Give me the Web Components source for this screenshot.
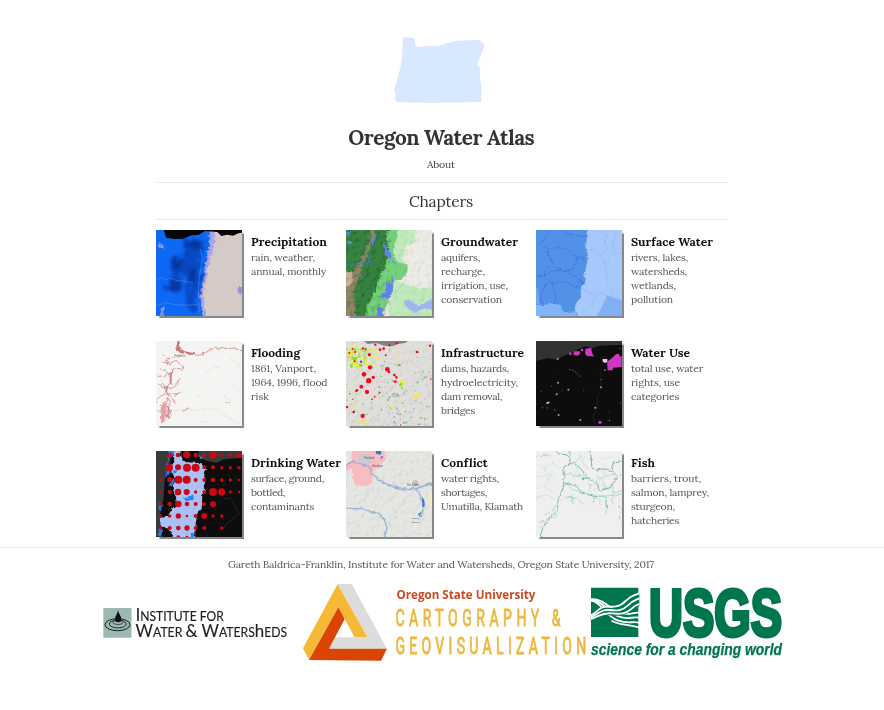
<!DOCTYPE html>
<html lang="en"><head><meta charset="utf-8"><title>Oregon Water Atlas</title>
<style>html,body{margin:0;background:#fff;color:#333;font-family:Lora,"Liberation Serif",serif}</style></head>
<body><water-atlas></water-atlas>
<script>
// One line of text whose tracking is adjusted so it occupies the width in "w".
customElements.define('fit-line', class extends HTMLElement{
 connectedCallback(){
  if(this.shadowRoot)return;
  const r=this.attachShadow({mode:'open'});
  r.innerHTML='<style>:host{display:block;white-space:nowrap}span{display:inline-block}</style><span><slot></slot></span>';
  const s=r.querySelector('span'),n=[...this.textContent].length,w=+this.getAttribute('w');
  const d=(w-s.getBoundingClientRect().width)/n;
  s.style.letterSpacing=d.toFixed(3)+'px';
  s.style.marginRight=(-d).toFixed(3)+'px';
 }
});
const rnd=seed=>()=>(seed=(seed*16807)%2147483647)/2147483647;
const dots=(list,fill)=>list.map(([x,y,r])=>`<circle cx="${x}" cy="${y}" r="${r}" fill="${fill}"/>`).join('');
const scatter=(seed,n,x,y,w,h,r,fill,o=1)=>{const q=rnd(seed);let s='';for(let i=0;i<n;i++){s+=`<circle cx="${(x+q()*w).toFixed(1)}" cy="${(y+q()*h).toFixed(1)}" r="${(r*(.6+q()*.8)).toFixed(1)}" fill="${fill}" opacity="${o}"/>`}return s};
const FX=`<defs>
<filter id="rough" color-interpolation-filters="sRGB" x="-10%" y="-10%" width="120%" height="120%"><feTurbulence type="fractalNoise" baseFrequency=".09" numOctaves="3" seed="4"/><feDisplacementMap in="SourceGraphic" scale="20" xChannelSelector="R" yChannelSelector="G"/><feGaussianBlur stdDeviation="1.1"/></filter>
<filter id="wob" color-interpolation-filters="sRGB" x="-10%" y="-10%" width="120%" height="120%"><feTurbulence type="fractalNoise" baseFrequency=".07" numOctaves="2" seed="8"/><feDisplacementMap in="SourceGraphic" scale="12" xChannelSelector="R" yChannelSelector="G"/><feGaussianBlur stdDeviation=".8"/></filter>
<filter id="soft" color-interpolation-filters="sRGB" x="-30%" y="-30%" width="160%" height="160%"><feTurbulence type="fractalNoise" baseFrequency=".06" numOctaves="4" seed="3" result="t"/><feDisplacementMap in="SourceGraphic" in2="t" scale="50" xChannelSelector="R" yChannelSelector="G"/><feGaussianBlur stdDeviation="4.5"/></filter>
<filter id="relief" x="0" y="0" width="100%" height="100%"><feTurbulence type="fractalNoise" baseFrequency=".06" numOctaves="4" seed="11"/><feDiffuseLighting surfaceScale="7" lighting-color="#fff" diffuseConstant="1.25"><feDistantLight azimuth="225" elevation="52"/></feDiffuseLighting></filter></defs>`;
const relief=(o,x=0,w=300)=>`<rect x="${x}" y="0" width="${w}" height="300" filter="url(#relief)" opacity="${o}" style="mix-blend-mode:multiply"/>`;
const MAPS={
precip:['18 15 258 258',`<rect width="300" height="300" fill="#d5cac5"/>
 <path d="M0 0H194L192 55 186 95 172 130 164 170 158 210 164 245 177 290H0Z" fill="#aaa4ec" filter="url(#rough)"/>
 <path d="M-20-20H179L178 52 172 95 165 125 160 170 150 215 154 250 168 310H-20Z" fill="#0d68f4" filter="url(#rough)"/>
 <g filter="url(#soft)" fill="#0741b8" opacity=".8"><path d="M98 52 130 34 165 45 158 84 150 112 157 165 144 199 137 262 118 258 108 210 115 168 98 142 96 196 72 204 47 194 48 168 70 152 55 122 62 98 92 92 108 78Z"/></g><g filter="url(#soft)" fill="#062c8c" opacity=".65"><ellipse cx="134" cy="62" rx="18" ry="20"/><ellipse cx="80" cy="122" rx="18" ry="20"/><ellipse cx="74" cy="182" rx="18" ry="14"/><ellipse cx="126" cy="150" rx="13" ry="26"/></g>
 <g filter="url(#rough)" fill="#8f92e8"><ellipse cx="34" cy="63" rx="8" ry="6"/><ellipse cx="271" cy="196" rx="9" ry="11"/><path d="M24 276 34 249 43 238 40 262 34 276Z"/></g>
 <path d="M15 170 31 158 47 163 65 160 80 167 102 168 129 174M18 242 50 233 74 239 108 241 142 238M150 70 158 102 149 150 145 194 148 263" fill="none" stroke="#98b7ef" stroke-width="1.3" opacity=".7"/>
 <path d="M40 10H280V23L265 25 249 32 231 29 214 33 202 21 165 18 146 29 125 31 99 41 73 42 48 38Z" fill="#070707"/>`],
ground:['18 15 258 258',`<rect width="300" height="300" fill="#ecebe6"/><rect x="10" width="110" height="300" fill="#a59a82"/>
 <path d="M168 0H240L225 30 228 50 200 67 188 92 194 110 205 138 170 167 190 175 235 190 290 183V290H145L155 150Z" fill="#c0eabc" filter="url(#wob)"/>
 <path d="M115 8H172L170 42 160 80 170 108 203 122 200 150 182 164 155 168 146 222 122 290H68L95 180 125 120Z" fill="#74d07c" filter="url(#wob)"/>
 <path d="M0 -20H145L138 42 148 78 139 120 122 148 106 198 85 240 67 300H45L38 165 0 120Z" fill="#36833f" filter="url(#rough)"/>
 <path d="M95 -10H112L99 47 76 102 58 152 42 197 47 290H5V174L42 135 72 87 88 48Z" fill="#918567" filter="url(#rough)"/><path d="M10 140 34 142 40 160 30 182H10Z" fill="#c5b494" filter="url(#wob)"/>
 ${relief(.6,0,150)}${relief(.2,145,155)}
 <g filter="url(#wob)" fill="#6080ea"><path d="M132 54 143 76 155 92 152 104 138 88 129 66ZM140 172 160 177 158 205 143 222 120 216 133 200Z"/><path d="M110 244 128 252 132 280H113Z"/><path d="M156 100 167 115 157 110ZM18 20 30 23 22 37ZM98 36 110 24 105 48 94 65ZM19 49 34 48 37 58 20 56ZM156 148 160 169 153 180Z"/></g>
 <path d="M194 228 207 225 228 241 248 239 260 229 280 222V254L250 250 230 263 209 255 195 240Z" fill="#a0b4f0" filter="url(#wob)"/>
 <path d="M18 120 48 121 65 115 94 111M82 118 94 86M56 153 68 160" stroke="#496fd4" stroke-width="3" fill="none"/>`],
surface:['18 15 258 258',`<rect width="300" height="300" fill="#5291e8"/><path d="M172 -20 170 42 168 70 174 91 171 118 162 145 167 165 153 187 152 216 137 237 134 252 153 290H300V-20Z" fill="#a6c8fb" filter="url(#wob)"/>
 <path d="M231 211 276 226V275H197L213 251Z" fill="#80b0f5"/><path d="M5 239 42 240 62 236 83 234 94 243 102 260 123 264 134 256 151 290H5Z" fill="#83b4f7" filter="url(#wob)"/><path d="M15 185 26 194 28 238H15Z" fill="#70a4ee"/>
 <g fill="none" stroke="#2b62c8" stroke-width="1.8" opacity=".75" filter="url(#wob)"><path d="M60 15 48 35 36 54 20 59M38 67 62 72 85 65 104 70 126 83 145 93 168 104M51 77 60 104 75 126 106 138 130 130 143 98M18 155 40 154 62 139 98 136 108 138 126 151 151 165 162 180M43 154 45 136 59 124M58 167 82 175 110 172 130 184 151 186M60 170 45 183 33 207 38 238M63 171 75 204 77 233M92 15 107 25 150 34 168 34M105 15 110 23M155 176 151 163"/></g>
 <g fill="none" stroke="#86aeea" stroke-width="1.2" filter="url(#wob)"><path d="M170 82 193 72 212 93 226 114 232 150 231 180 249 211 276 222M226 114 255 82 276 86M255 82 249 51 261 18M213 92 231 66 225 44 237 15M155 190 177 203 198 211 214 202 231 211M196 211 182 240 157 265M213 251 228 230"/></g>`],
flood:['18 18 258 255',`<rect width="300" height="300" fill="#f4f4f2"/>
 <g filter="url(#wob)" fill="none" stroke-linejoin="round"><path d="M84 10V40L95 51 118 56 144 61 166 54 182 42 201 39 220 38 234 42 248 38 280 49" stroke="#cc8287" stroke-width="2.6"/><path d="M84 5V42L102 53" stroke="#c8777c" stroke-width="10"/><path d="M94 50 134 58" stroke="#c8777c" stroke-width="6"/>
 <path d="M98 57 76 63 55 72 39 62M87 64 76 78 60 83 37 82M78 75 92 91 102 102M22 123 38 126 57 118 66 104 80 100 100 103M65 103 62 145 44 157 49 175 34 183 20 192M44 158 68 158 78 149 91 132M50 175 62 184 75 205 72 193M49 178 91 175 70 181M55 184 39 209 35 235 36 266M52 191 62 202 57 215M52 189 45 221 57 250 65 225M18 202 38 212M20 225 38 235 61 246M21 147 48 161 34 139M59 119 46 106 31 101M60 67 49 76 60 91" stroke="#d78f93" stroke-width="2.4"/>
 <path d="M62 108V146M46 154 52 177M43 207 37 264M52 214 59 229 50 245" stroke="#cf858a" stroke-width="6"/><path d="M45 201 40 259" stroke="#e5a5a6" stroke-width="15" opacity=".6"/><path d="M97 229 121 216" stroke="#d78f93" stroke-width="3"/>
 <path d="M65 225 97 225 120 218M121 220 138 229 171 220 204 225 236 249 270 268M139 186 154 179M150 263 178 258M165 113 195 95 217 103M239 68 260 85 270 114M250 149 264 167M222 184 241 197 239 215M268 91 273 79" stroke="#e7c9c8" stroke-width="1.2"/></g>
 <g font-family="Liberation Sans"><text x="73" y="67" font-size="9" fill="#888">Portland</text><text x="225" y="203" font-size="6" fill="#999">Boise</text></g>`],
infra:['18 18 258 255',`<rect width="300" height="300" fill="#e0dfdb"/>${relief(.16)}<path d="M63 10H210L198 23 175 27 157 34 132 32 109 24 83 27Z" fill="#828282"/>
 <path d="M75 10V50L93 69 110 94M76 105 125 160 150 249M139 81 170 93 207 75 263 123M153 135 200 146 235 199" stroke="#c7c9c8" fill="none" stroke-width="1.5"/>
 ${scatter(31,60,22,38,60,58,3,'#96df45')}${scatter(87,50,24,32,95,67,3,'#f0ed41')}${scatter(112,75,68,42,203,225,2,'#8cbd85',.75)}${scatter(19,38,115,90,155,180,2.2,'#59b85b',.8)}${scatter(221,25,18,90,45,180,2,'#92ce79',.8)}${scatter(76,26,145,175,90,93,2.4,'#6c8fb7',.6)}
 ${dots([[186,142,7],[188,152,5],[154,214,5],[232,180,7],[222,184,5],[115,70,5],[45,88,6],[176,63,4],[45,208,4],[224,185,4],[68,261,6],[78,264,4],[55,255,4]],'#f1ec47')}${dots([[181,150,4],[44,72,6],[62,91,5],[34,94,4],[184,147,4]],'#79df33')}
 ${dots([[90,97,6.5],[72,118,7],[86,137,8],[100,127,5],[64,155,6],[81,171,6.5],[68,243,6.5],[142,103,7],[88,59,5],[51,166,4],[163,120,4],[169,127,4],[147,111,4],[166,140,4],[148,31,3.5],[106,29,3.5],[120,44,4],[131,41,4],[231,51,4],[270,32,3.5],[170,24,4],[38,42,3],[28,54,3],[45,51,3],[69,40,3.5],[63,80,3.5],[48,168,3],[41,231,4],[21,216,4],[104,185,2.5],[96,193,2.5],[119,173,2.5],[272,132,2.5],[179,90,2.5],[77,43,3],[44,79,3],[137,61,3],[29,176,2],[38,193,2],[182,270,2]],'#f00d1b')}`],
use:['18 18 258 255',`<rect width="300" height="300" fill="#0e0d0e"/><path d="M0 0H280V30L235 31 207 32 187 39 165 34 142 44 115 57 97 64 83 74 53 69 18 78Z" fill="#323232"/><path d="M211 103 215 151 203 186 202 212 190 244 196 272" stroke="#242424" stroke-width="2" fill="none"/>
 <g fill="#d138c2"><path d="M167 41 184 38 185 49 191 65 181 63 172 64 165 57ZM132 49H149L151 55 144 62 130 60ZM231 80 246 69 259 57H268V64H275V96L249 98 248 106H233Z"/><circle cx="121" cy="56" r="4"/><circle cx="156" cy="45" r="4"/><circle cx="210" cy="262" r="5"/><circle cx="225" cy="105" r="3"/></g><path d="M218 72H232V80L226 84 218 80Z" fill="#f7c3ed"/>
 ${dots([[83,72,3],[84,143,3],[115,164,3],[80,178,3],[86,240,3],[151,255,3],[213,157,3],[196,218,3],[238,256,2]],'#b795a2')}${scatter(44,11,20,88,250,150,1.7,'#8a4874')}<path d="m49 204 9-3-2 3-6 2" stroke="#eac3d6" fill="none" stroke-width="3"/><path d="m117 103 8 1 10 6 13 12 2 5M268 39 272 44M270 206 275 202" stroke="#bd4874" fill="none" stroke-width="2.5" stroke-dasharray="5 4"/>`],
drinking:['18 18 258 258',`<rect width="300" height="300" fill="#0e0d0e"/><path d="M18 18H62L60 74 45 96 40 164 31 205 34 275H18ZM145 18H276V38L222 43 200 53 169 47 145 35Z" fill="#393b3a"/><path d="M55 15 72 18 66 39 52 46 46 60 60 85 46 99 52 68ZM143 30 159 39 150 43ZM26 172 40 179 32 199 26 192ZM27 248 40 255 32 275 23 269ZM60 105 72 99 70 120 59 128Z" fill="#2778dc" filter="url(#wob)"/>
 <path d="M69 10H90L93 40 103 51 155 55 168 73 162 80 166 107 161 125 166 139 157 151 155 192 142 205 137 237 135 290H82L54 251 31 239 33 219 58 213 64 192 80 182 78 153 70 137 76 97 61 82 62 61 73 52Z" fill="#abc1f3" filter="url(#wob)"/>
 <path d="M69 75 82 77 72 92ZM93 153 105 160 131 152 128 166 110 167ZM120 266 133 264 133 275H119Z" fill="#2281f4" filter="url(#wob)"/><path d="M218 161H243M243 165 263 194 267 208 238 229 218 252" stroke="#373737" fill="none" stroke-width="2"/>
 <path d="M93 20 99 75M80 112 135 180 109 276M78 199 140 241" stroke="#8fa8d7" fill="none"/>
 ${dots([[59,31,8],[84,30,7],[110,29,11],[137,30,7],[162,30,6],[189,30,11],[215,30,5],[241,30,6],[267,30,8],[58,68,11],[84,67,9],[111,68,12],[137,68,12],[163,67,6],[189,67,6],[215,68,5],[241,68,5],[267,68,5],[32,105,5],[59,104,8],[85,104,12],[110,104,12],[137,105,6],[163,105,6],[189,105,7],[215,105,5],[241,105,5],[267,105,4],[31,141,4],[59,141,6],[84,141,10],[110,141,9],[137,141,5],[163,141,6],[189,141,12],[215,141,11],[241,141,5],[267,141,4],[32,178,5],[59,177,7],[85,177,10],[111,177,7],[137,177,6],[162,178,6],[189,178,9],[31,213,5],[59,213,5],[85,213,8],[111,213,4],[137,213,6],[163,213,9],[189,213,5],[215,213,5],[32,249,5],[59,249,6],[85,249,7],[111,249,8],[137,249,6],[163,249,6],[215,249,5],[85,277,6],[111,277,5],[241,213,1]],'#cb0715')}`],
conflict:['18 18 258 258',`<rect width="300" height="300" fill="#e6e6e3"/>${relief(.16)}<path d="M35 5H136L136 50 122 56 122 68 98 78 97 111 77 125 45 121 35 95 40 69 18 75V54L34 54Z" fill="#f7bdc1" filter="url(#wob)"/>
 <ellipse cx="75" cy="43" rx="23" ry="15" fill="#c7cbd2"/><circle cx="226" cy="114" r="9" fill="#c4c4c4"/><path d="M268 145 276 138V190L264 176Z" fill="#efecc7"/>
 <g fill="none" stroke="#9bb2d6" filter="url(#wob)"><path d="M14 63 37 48 61 57 88 64 94 86 124 111 155 124 193 132 230 130 285 112" stroke-width="5"/><path d="M10 188 42 191 65 190 89 198 118 206 134 226 141 249 133 280M229 132 241 151 251 178 248 201 234 226" stroke-width="4"/><path d="M106 112 96 135 75 158 78 190M147 223 158 193 197 158 230 132M37 55 28 83 18 122M155 123 168 93 193 73M142 235 178 256 201 276" stroke-width="1.3" opacity=".5"/></g>
 <path d="M107 15H124L123 29 108 26ZM121 36 130 32 125 43ZM246 155 253 166 253 183 247 187ZM246 198 238 214 234 208Z" fill="#3e75c6"/><g font-family="Liberation Sans" font-size="8" fill="#555"><text x="73" y="42">Portland</text><text x="96" y="67">Gresham</text><text x="200" y="123">The Dalles</text><text x="215" y="223" font-size="7">Warm</text><text x="215" y="234" font-size="7">Springs</text></g>`],
fish:['18 18 258 258',`<rect width="300" height="300" fill="#eeefee"/>
 <g fill="none" stroke="#72b7a7" filter="url(#wob)"><path d="M70 10 85 26 112 30 120 44 119 57 98 71 102 96 100 127 85 160 82 194 56 224 38 248 28 285M116 57 133 55 151 70 170 93M178 10 184 38 185 65 202 75 222 70 246 78 249 54 280 50M101 114 140 124 155 144 194 154 227 153 229 188M155 101 179 99 199 115 210 138 241 128 259 99 250 79" stroke-width="2.8"/><path d="M18 36 44 28 66 34M121 46 118 10M133 55 148 42 149 22M99 89 121 87 150 92 180 99M197 112 216 97 240 91 280 92M200 92 219 108 229 133 245 116 252 144 280 134M98 126 120 109M102 111 130 135 152 140M177 99 181 126 172 149M250 154 246 178M229 153 280 147M230 189 227 205M265 180 276 192 268 219 276 228M29 247 53 232M22 232 43 230 57 220 74 215 85 197M42 211 69 197 78 177M86 164 96 164M103 156 144 160 158 177M127 151 127 175M186 179 196 154 214 179" stroke-width="2" opacity=".65"/><path d="M20 55 42 71 67 54 95 73M19 98 57 88 82 110M19 130 42 122 68 141 85 130M20 159 50 149 78 163M44 71 58 98 45 126M134 58 144 79 135 94M160 31 162 59 184 73M202 55 218 40 241 38M216 69 225 91M182 119 205 116 222 124M183 139 200 130M243 136 255 158 274 166" stroke-width="1.3" opacity=".45"/></g>`]
};
customElements.define('map-tile', class extends HTMLElement{
 connectedCallback(){
  const [vb,body]=MAPS[this.getAttribute('map')];
  this.attachShadow({mode:'open'}).innerHTML=`<style>:host{display:block;width:86px;height:var(--h,86px);flex:none;box-shadow:2.4px 2.4px 1px #888}svg{display:block;width:100%;height:100%;overflow:hidden}</style><svg viewBox="${vb}" preserveAspectRatio="none">${FX}${body}</svg>`;
 }
});
customElements.define('atlas-chapter', class extends HTMLElement{
 connectedCallback(){
  const [t,w]=this.getAttribute('heading').split('|');
  this.attachShadow({mode:'open'}).innerHTML=`<style>:host{display:flex;gap:9px;align-items:flex-start}h3{margin:4px 0 1px;font:bold 12px/16px Lora,"Liberation Serif",serif;color:#111}.b{font-size:10.4px;line-height:14px;color:#555}</style>
  <map-tile map="${this.getAttribute('map')}"></map-tile><div><h3><fit-line w="${w}">${t}</fit-line></h3><div class="b">${this.getAttribute('lines').split(';').map(l=>{const [a,b]=l.split('|');return `<fit-line w="${b}">${a}</fit-line>`}).join('')}</div></div>`;
 }
});
const CH=[['precip','Precipitation|76','rain, weather,|64;annual, monthly|75'],['ground','Groundwater|77','aquifers,|39;recharge,|44;irrigation, use,|67;conservation|61'],['surface','Surface Water|82','rivers, lakes,|57;watersheds,|56;wetlands,|45;pollution|42'],
['flood','Flooding|49','1861, Vanport,|65;1964, 1996, flood|76;risk|18'],['infra','Infrastructure|83','dams, hazards,|68;hydroelectricity,|77;dam removal,|61;bridges|34'],['use','Water Use|59','total use, water|72;rights, use|49;categories|48'],
['drinking','Drinking Water|90','surface, ground,|73;bottled,|34;contaminants|63'],['conflict','Conflict|46','water rights,|58;shortages,|46;Umatilla, Klamath|82'],['fish','Fish|24','barriers, trout,|70;salmon, lamprey,|78;sturgeon,|44;hatcheries|48']];
customElements.define('atlas-header', class extends HTMLElement{
 connectedCallback(){this.attachShadow({mode:'open'}).innerHTML=`<style>:host{display:flex;flex-direction:column;align-items:center;padding-top:35px;width:571px;margin:0 0 0 156px}svg{display:block;width:94px;height:70px;margin-right:3px}
 h1{margin:17px 0 0;font:bold 20.8px/32px Lora,"Liberation Serif",serif}.a{font-size:10.4px;line-height:14px;margin:4px 1px 10px 0;color:#444}h2{box-sizing:border-box;width:100%;display:flex;justify-content:center;padding-right:1px;margin:0;font-size:15.6px;font-weight:400;line-height:36px;border:solid #e7e7e7;border-width:1px 0}</style>
 <svg viewBox="160 30 282 210"><path d="M190 37 202 36 225 40 228 62 235 66 249 65 263 62 286 64 304 61 331 52 354 47 386 46 419 45 432 56 434 64 424 91 412 118 420 127 422 139 421 160 425 179V231L272 234 172 231 166 222 168 205 163 192 169 176 176 153 185 113 189 71Z" fill="#d8e8ff"/></svg>
 <h1><fit-line w="186">Oregon Water Atlas</fit-line></h1><div class="a"><fit-line w="28">About</fit-line></div><h2><fit-line w="64">Chapters</fit-line></h2>`}
});
customElements.define('logo-iww', class extends HTMLElement{
 connectedCallback(){this.attachShadow({mode:'open'}).innerHTML=`<style>:host{display:block}svg{display:block;overflow:visible}</style><svg width="187" height="35" viewBox="103 606 187 35"><rect x="103.3" y="608" width="28.2" height="29.7" fill="#9bb8b2"/>
 <g fill="none" stroke="#151c1b"><ellipse cx="117.5" cy="624.7" rx="12.5" ry="6" stroke-width="1"/><ellipse cx="117.8" cy="624" rx="8.4" ry="3.9" stroke-width=".9"/><ellipse cx="118" cy="622.5" rx="5" ry="2" stroke-width=".7"/></g><path d="M118 610C117.5 614 115 616 115 619a3.2 3.2 0 0 0 6.4 0C121.400 616 118.700 614 118 610Z" fill="#111"/>
 <g font-family="Lato,sans-serif" fill="#222" stroke="#222" stroke-width=".15"><text x="135.8" y="620.8" font-size="17" textLength="88" lengthAdjust="spacingAndGlyphs">I<tspan font-size="13">NSTITUTE FOR</tspan></text>
 <text x="135.6" y="637.4" font-size="18" textLength="151.500" lengthAdjust="spacingAndGlyphs">W<tspan font-size="13">ATER </tspan>&amp; W<tspan font-size="13">ATERS</tspan>h<tspan font-size="13">EDS</tspan></text></g></svg>`}
});
customElements.define('logo-carto', class extends HTMLElement{
 connectedCallback(){this.attachShadow({mode:'open'}).innerHTML=`<style>:host{display:block}svg{display:block;overflow:visible}</style><svg width="287" height="80" viewBox="302 583 287 80"><g transform="translate(95 550) scale(.33333)"><path d="M728 102 624 295 642 330 730 172 779 262H818Z" fill="#f6b936"/><path d="M728 102H770L876 296H702L721 262H818Z" fill="#dcdcdc"/><path d="M730 172 749 207 702 296H876L858 332 642 330Z" fill="#dc4405"/></g>
 <text x="396.500" y="598.700" font-family="Open Sans,sans-serif" font-weight="bold" font-size="12.800" fill="#cc4a20" textLength="139" lengthAdjust="spacingAndGlyphs">Oregon State University</text>
 <g font-family="Roboto,sans-serif" font-size="23.4" fill="#efb73e" stroke="#efb73e" stroke-width=".9" transform="translate(396 0) scale(.6 1)"><text x="-1" y="626.2" textLength="275">CARTOGRAPHY &amp;</text><text x="-1" y="653.800" textLength="318">GEOVISUALIZATION</text></g></svg>`}
});
customElements.define('logo-usgs', class extends HTMLElement{
 connectedCallback(){this.attachShadow({mode:'open'}).innerHTML=`<style>:host{display:block}svg{display:block;overflow:visible}</style><svg width="195" height="78" viewBox="590 584 195 78"><g transform="translate(385 575) scale(.33333)"><path d="M618 38H760V186H618Z" fill="#00764e"/>
 <g fill="none" stroke="#fff" stroke-width="5.500"><path d="M617 73C652 68 672 100 703 112S740 111 763 113"/><path d="M617 75C648 72 668 112 700 124S738 124 763 128"/><path d="M617 77C645 76 662 124 698 136S738 138 763 143"/><path d="M680 137C700 150 735 148 763 158"/></g>
 <path d="M617 120C640 108 646 96 664 97S702 98 720 80 743 62 763 54V94C740 102 733 124 690 122S648 116 617 136Z" fill="#00764e"/>
 <g fill="none" stroke="#fff" stroke-width="5.500"><path d="M617 122C638 112 643 94 664 95S704 97 722 78 743 63 763 55"/><path d="M617 127C640 118 648 102 672 105S713 107 729 91 747 77 763 70"/><path d="M617 132C643 124 651 112 680 115S721 117 737 103 752 92 763 87"/></g></g>
 <text x="649" y="635.800" font-family="Liberation Sans,sans-serif" font-weight="bold" font-size="66" fill="#00764e" stroke="#00764e" stroke-width="4" textLength="133" lengthAdjust="spacingAndGlyphs">USGS</text>
 <text x="591" y="654.700" font-family="Liberation Sans,sans-serif" font-weight="bold" font-style="italic" font-size="16.500" fill="#00764e" stroke="#00764e" stroke-width=".25" textLength="191" lengthAdjust="spacingAndGlyphs">science for a changing world</text></svg>`}
});
customElements.define('atlas-footer', class extends HTMLElement{
 connectedCallback(){this.attachShadow({mode:'open'}).innerHTML=`<style>:host{display:block;border-top:1px solid #e7e7e7}.c{display:flex;justify-content:center;font-size:10.4px;line-height:14px;color:#555;padding:10px 2px 0 0}.l{display:grid;grid-template-columns:199px 288px 195px;padding:11px 0 0 103px;align-items:start}logo-iww{padding-top:23px}logo-usgs{padding-top:1px}</style>
 <div class="c"><fit-line w="426">Gareth Baldrica-Franklin, Institute for Water and Watersheds, Oregon State University, 2017</fit-line></div><div class="l"><logo-iww></logo-iww><logo-carto></logo-carto><logo-usgs></logo-usgs></div>`}
});
customElements.define('water-atlas', class extends HTMLElement{
 connectedCallback(){this.attachShadow({mode:'open'}).innerHTML=`<style>:host{display:block;min-height:710px;overflow:hidden}.g{display:grid;grid-template-columns:repeat(3,190px);grid-template-rows:111px 110px 86px;width:570px;margin:9px 0 0 156px;height:317px}.g>:nth-child(n+4):nth-child(-n+6){--h:85px}</style>
 <atlas-header></atlas-header><main class="g" style="margin-top:10px">${CH.map(([m,h,l])=>`<atlas-chapter map="${m}" heading="${h}" lines="${l}"></atlas-chapter>`).join('')}</main><atlas-footer></atlas-footer>`}
});
</script></body></html>
